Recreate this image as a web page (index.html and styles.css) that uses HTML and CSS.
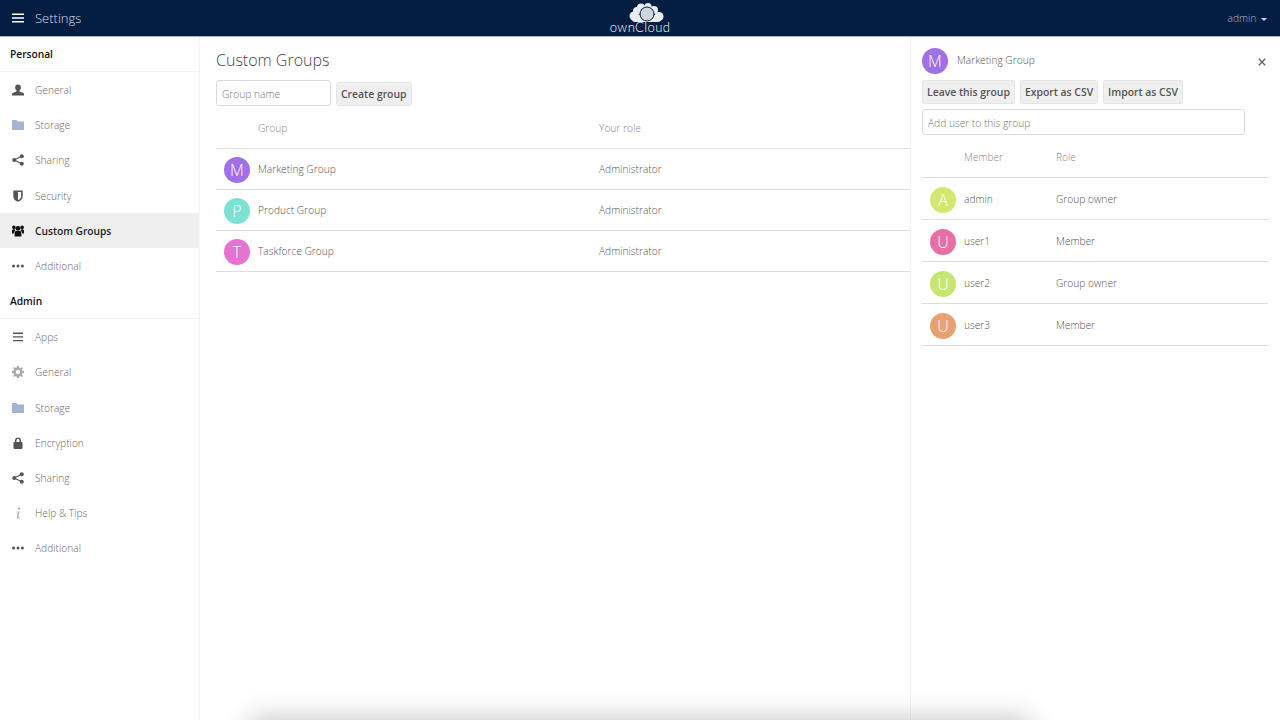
FILE: index.html
```html
<!DOCTYPE html>
<html>
<head>
    <title>Settings</title>
    <link rel="stylesheet" href="styles.css">
</head>
<body>
    <header class="topbar">
        <div class="topbar-left">
            <svg class="menu-icon" viewBox="0 0 12 10"><path d="M0 0.5h12v1.6H0zM0 4.2h12v1.6H0zM0 7.900h12v1.600H0z"/></svg>
            <span class="page-name">Settings</span>
        </div>
        <svg class="logo" viewBox="0 0 62 36">
            <g class="logo-cloud">
                <circle cx="25" cy="16" r="4.500"/>
                <circle cx="28" cy="11" r="4"/>
                <circle cx="32" cy="7.500" r="4"/>
                <circle cx="39" cy="6.500" r="3.500"/>
                <circle cx="45" cy="10" r="4"/>
                <circle cx="50" cy="16.500" r="4.500"/>
                <rect x="23" y="15" width="29" height="7" rx="3"/>
                <circle class="logo-ring" cx="38" cy="14" r="7"/>
            </g>
            <text class="logo-text" x="31" y="32">ownCloud</text>
        </svg>
        <div class="user-menu">admin <span class="caret"></span></div>
    </header>

    <div class="layout">
        <nav class="sidebar">
            <h2 class="nav-title">Personal</h2>
            <a class="nav-item">
                <svg class="nav-icon" viewBox="0 0 12 12"><path d="M6 .5c1.800 0 2.900 1.300 2.900 3.100 0 1.300-.6 2.400-1.400 3v1l3.200 1.100c.8.300 1.300.8 1.300 1.500v1.300H0v-1.300c0-.7.500-1.200 1.300-1.500l3.200-1.100v-1c-.8-.6-1.400-1.700-1.400-3C3.100 1.800 4.200.5 6 .5z"/></svg>
                General
            </a>
            <a class="nav-item">
                <svg class="nav-icon icon-folder" viewBox="0 0 12 12"><path d="M0 1h4.500l1 1.500H12V11H0z"/></svg>
                Storage
            </a>
            <a class="nav-item">
                <svg class="nav-icon" viewBox="0 0 12 12"><circle cx="2.200" cy="6" r="2"/><circle cx="9.800" cy="2.200" r="2"/><circle cx="9.800" cy="9.800" r="2"/><path class="share-line" d="M2.200 6l7.600-3.800M2.200 6l7.600 3.800"/></svg>
                Sharing
            </a>
            <a class="nav-item">
                <svg class="nav-icon" viewBox="0 0 12 12"><path fill-rule="evenodd" d="M1.300.5h9.400v6c0 2.500-2.100 4.300-4.700 5.300-2.600-1-4.700-2.800-4.700-5.300zM6 2v8.200c1.700-.8 3.100-2.100 3.100-3.700V2z"/></svg>
                Security
            </a>
            <a class="nav-item active">
                <svg class="nav-icon" viewBox="0 0 12 12"><circle cx="6" cy="3.400" r="2.400"/><circle cx="1.900" cy="2.400" r="1.800"/><circle cx="10.100" cy="2.400" r="1.800"/><path d="M2.600 11.500V8c0-1.500 1-2 2-2h2.800c1 0 2 .5 2 2v3.500zM0 8.500V6c0-1 .6-1.700 1.400-1.700h1.200c.2.700.5 1.100.9 1.500C2.500 6.200 1.800 7 1.800 8.500zM12 8.500V6c0-1-.6-1.700-1.400-1.700H9.400c-.2.700-.5 1.100-.9 1.500 1 .4 1.700 1.200 1.700 2.700z"/></svg>
                Custom Groups
            </a>
            <a class="nav-item">
                <svg class="nav-icon" viewBox="0 0 12 12"><circle cx="1.600" cy="6" r="1.500"/><circle cx="6" cy="6" r="1.500"/><circle cx="10.400" cy="6" r="1.500"/></svg>
                Additional
            </a>

            <h2 class="nav-title admin-title">Admin</h2>
            <a class="nav-item">
                <svg class="nav-icon" viewBox="0 0 12 12"><path d="M1 1.600h10v1.300H1zM1 5.300h10v1.300H1zM1 9h10v1.300H1z"/></svg>
                Apps
            </a>
            <a class="nav-item">
                <svg class="nav-icon icon-gear" viewBox="0 0 12 12"><path fill-rule="evenodd" d="M5 0h2l.3 1.700 1.100.5L9.900 1.200l1 1-1 1.500.5 1.100L12 5v2l-1.600.3-.5 1.100 1 1.500-1.100 1.100-1.500-1-1 .5L7 12H5l-.3-1.600-1.100-.5-1.400 1-1.100-1.100 1-1.400-.5-1.100L0 7V5l1.600-.3.5-1.100-1-1.400 1.100-1.100 1.400 1 1.100-.5zM6 3.800a2.200 2.200 0 1 0 0 4.400 2.200 2.200 0 0 0 0-4.400z"/></svg>
                General
            </a>
            <a class="nav-item">
                <svg class="nav-icon icon-folder" viewBox="0 0 12 12"><path d="M0 1h4.500l1 1.500H12V11H0z"/></svg>
                Storage
            </a>
            <a class="nav-item">
                <svg class="nav-icon" viewBox="0 0 12 12"><path fill-rule="evenodd" d="M3 5V3.700C3 1.800 4.200.6 6 .6s3 1.200 3 3.100V5h.6c.5 0 .9.400.9.900v5.200c0 .5-.4.900-.9.900H2.400c-.5 0-.9-.4-.9-.9V5.900c0-.5.400-.9.900-.9zm1.500 0h3V3.700C7.500 2.700 7 2 6 2s-1.500.7-1.500 1.700z"/></svg>
                Encryption
            </a>
            <a class="nav-item">
                <svg class="nav-icon" viewBox="0 0 12 12"><circle cx="2.200" cy="6" r="2"/><circle cx="9.800" cy="2.200" r="2"/><circle cx="9.800" cy="9.800" r="2"/><path class="share-line" d="M2.200 6l7.600-3.800M2.200 6l7.600 3.800"/></svg>
                Sharing
            </a>
            <a class="nav-item">
                <svg class="nav-icon icon-info" viewBox="0 0 12 12"><circle cx="7" cy="1.500" r="1.200"/><path d="M4.800 4.500h2.900L6.400 10c-.1.400.3.500 1.300.1v.8c-1 .7-3.200 1.200-3-.4l1-5.200-1 0z"/></svg>
                Help &amp; Tips
            </a>
            <a class="nav-item">
                <svg class="nav-icon" viewBox="0 0 12 12"><circle cx="1.600" cy="6" r="1.500"/><circle cx="6" cy="6" r="1.500"/><circle cx="10.400" cy="6" r="1.500"/></svg>
                Additional
            </a>
        </nav>

        <main class="content">
            <h1 class="content-title">Custom Groups</h1>
            <form class="create-form">
                <input class="text-input group-input" type="text" placeholder="Group name">
                <button class="btn" type="button">Create group</button>
            </form>
            <table class="data-table groups-table">
                <thead>
                    <tr><th class="col-avatar"></th><th class="col-group">Group</th><th>Your role</th></tr>
                </thead>
                <tbody>
                    <tr>
                        <td><span class="avatar purple">M</span></td>
                        <td>Marketing Group</td>
                        <td>Administrator</td>
                    </tr>
                    <tr>
                        <td><span class="avatar teal">P</span></td>
                        <td>Product Group</td>
                        <td>Administrator</td>
                    </tr>
                    <tr>
                        <td><span class="avatar pink">T</span></td>
                        <td>Taskforce Group</td>
                        <td>Administrator</td>
                    </tr>
                </tbody>
            </table>
        </main>

        <aside class="details">
            <div class="details-head">
                <span class="avatar purple">M</span>
                <span class="details-name">Marketing Group</span>
                <svg class="close-icon" viewBox="0 0 10 10"><path d="M1 1l8 8M9 1l-8 8"/></svg>
            </div>
            <div class="details-actions">
                <button class="btn" type="button">Leave this group</button>
                <button class="btn" type="button">Export as CSV</button>
                <button class="btn" type="button">Import as CSV</button>
            </div>
            <input class="text-input member-input" type="text" placeholder="Add user to this group">
            <table class="data-table members-table">
                <thead>
                    <tr><th class="col-avatar"></th><th class="col-member">Member</th><th>Role</th></tr>
                </thead>
                <tbody>
                    <tr>
                        <td><span class="avatar lime">A</span></td>
                        <td>admin</td>
                        <td>Group owner</td>
                    </tr>
                    <tr>
                        <td><span class="avatar rose">U</span></td>
                        <td>user1</td>
                        <td>Member</td>
                    </tr>
                    <tr>
                        <td><span class="avatar green">U</span></td>
                        <td>user2</td>
                        <td>Group owner</td>
                    </tr>
                    <tr>
                        <td><span class="avatar orange">U</span></td>
                        <td>user3</td>
                        <td>Member</td>
                    </tr>
                </tbody>
            </table>
        </aside>
    </div>
    <div class="bottom-shadow"></div>
</body>
</html>
```

FILE: styles.css
```css
* {
    box-sizing: border-box;
}

html, body {
    height: 100%;
}

body {
    font-family: "Open Sans", Arial, sans-serif;
    font-size: 10.200px;
    font-weight: 300;
    color: #555;
    background-color: #fff;
    margin: 0;
    padding: 0;
    overflow: hidden;
    position: relative;
}

.topbar {
    display: grid;
    grid-template-columns: 1fr 62px 1fr;
    align-items: center;
    height: 37px;
    padding: 0 13px 0 12px;
    background-color: #041e42;
    border-bottom: 1px solid #a9b4c4;
    color: #fff;
}

.topbar-left {
    display: flex;
    align-items: center;
}

.menu-icon {
    width: 12px;
    height: 10px;
    margin-right: 11px;
    fill: #fff;
}

.page-name {
    font-size: 13px;
    color: #d5dae2;
}

.logo {
    width: 62px;
    height: 36px;
}

.logo-cloud {
    fill: #e9edf2;
}

.logo-ring {
    fill: #cfd6df;
    stroke: #041e42;
    stroke-width: 1;
}

.logo-text {
    font-family: Lato, "Open Sans", sans-serif;
    font-size: 13px;
    font-weight: 300;
    fill: #fff;
    text-anchor: middle;
    letter-spacing: 0.4px;
}

.user-menu {
    justify-self: end;
    color: #a9b4c4;
    font-size: 10.200px;
}

.caret {
    display: inline-block;
    width: 0;
    height: 0;
    margin-left: 2px;
    vertical-align: middle;
    border-left: 3px solid transparent;
    border-right: 3px solid transparent;
    border-top: 3px solid #d5dae2;
}

.layout {
    display: flex;
    height: 683px;
}

.sidebar {
    flex: 0 0 200px;
    border-right: 1px solid #f3f3f3;
}

.nav-title {
    display: flex;
    align-items: center;
    height: 35px;
    margin: 0;
    padding-left: 10px;
    font-size: 10.200px;
    font-weight: 600;
    color: #111;
    border-bottom: 1px solid #f3f3f3;
}

.admin-title {
    height: 36px;
}

.nav-item {
    display: flex;
    align-items: center;
    height: 35.200px;
    padding: 1px 0 0 12px;
    color: #666;
}

.nav-item.active {
    background-color: #efefef;
    color: #222;
    font-weight: 600;
}

.nav-item.active .nav-icon {
    fill: #111;
}

.nav-icon {
    flex: none;
    width: 12px;
    height: 12px;
    margin-right: 11px;
    fill: #555;
}

.icon-folder {
    fill: #a3b4d0;
}

.icon-gear {
    fill: #aaa;
}

.icon-info {
    fill: #b5b5b5;
}

.share-line {
    fill: none;
    stroke: #555;
    stroke-width: 1.200;
}

.content {
    flex: 0 0 711px;
    padding: 0 0 0 16px;
    border-right: 1px solid #f3f3f3;
}

.content-title {
    margin: 12px 0 8px;
    font-size: 16px;
    line-height: 23px;
    font-weight: 300;
    color: #444;
}

.create-form {
    display: flex;
    align-items: flex-end;
    gap: 5px;
}

.text-input {
    height: 26px;
    padding: 2px 5px 0;
    font-family: inherit;
    font-size: 10.200px;
    font-weight: 300;
    color: #555;
    background-color: #fff;
    border: 1px solid #dbdbdb;
    border-radius: 3px;
    outline: none;
}

.text-input::placeholder {
    color: #777;
    opacity: 1;
}

.group-input {
    width: 115px;
}

.btn {
    height: 24px;
    padding: 0 4px;
    font-family: inherit;
    font-size: 10.400px;
    font-weight: 600;
    color: #555;
    background-color: #efefef;
    border: 1px solid #e4e4e4;
    border-radius: 3px;
}

.data-table {
    width: 100%;
    border-collapse: collapse;
    table-layout: fixed;
}

.data-table th {
    padding: 0;
    font-weight: 300;
    text-align: left;
    color: #888;
    border-bottom: 1px solid #ddd;
}

.data-table td {
    padding: 0;
    border-bottom: 1px solid #ddd;
}

.col-avatar {
    width: 42px;
}

.col-group {
    width: 341px;
}

.col-member {
    width: 92px;
}

.groups-table {
    margin-top: 2px;
}

.groups-table th {
    height: 40px;
}

.groups-table td {
    height: 41px;
}

.groups-table .avatar {
    margin: 3px 0 0 8px;
}

.members-table {
    margin-top: 1px;
}

.members-table th {
    height: 41px;
    padding-top: 2px;
}

.members-table td {
    height: 42px;
    padding-top: 2px;
}

.members-table .avatar {
    margin: 1px 0 0 8px;
}

.avatar {
    display: flex;
    align-items: center;
    justify-content: center;
    flex: none;
    width: 26px;
    height: 26px;
    font-size: 16px;
    color: #fff;
    border-radius: 50%;
}

.purple { background-color: #a070e6; }
.teal { background-color: #7de2d1; }
.pink { background-color: #e672d4; }
.lime { background-color: #d4e76f; }
.rose { background-color: #e670a6; }
.green { background-color: #c6e671; }
.orange { background-color: #e8a271; }

.details {
    flex: 1;
    padding: 11px 12px 0 11px;
}

.details-head {
    display: flex;
    align-items: center;
    height: 26px;
}

.details-name {
    margin: 0 0 3px 9px;
}

.close-icon {
    width: 8px;
    height: 8px;
    margin-left: auto;
    margin-right: 2px;
    margin-top: 2px;
    fill: none;
    stroke: #666;
    stroke-width: 1.800;
}

.details-actions {
    display: flex;
    gap: 5px;
    margin-top: 6px;
}

.member-input {
    display: block;
    width: 323px;
    margin-top: 5px;
}

.bottom-shadow {
    position: absolute;
    left: 260px;
    top: 726px;
    width: 760px;
    height: 20px;
    box-shadow: 0 0 26px 10px rgba(0, 0, 0, 0.2);
}
```
